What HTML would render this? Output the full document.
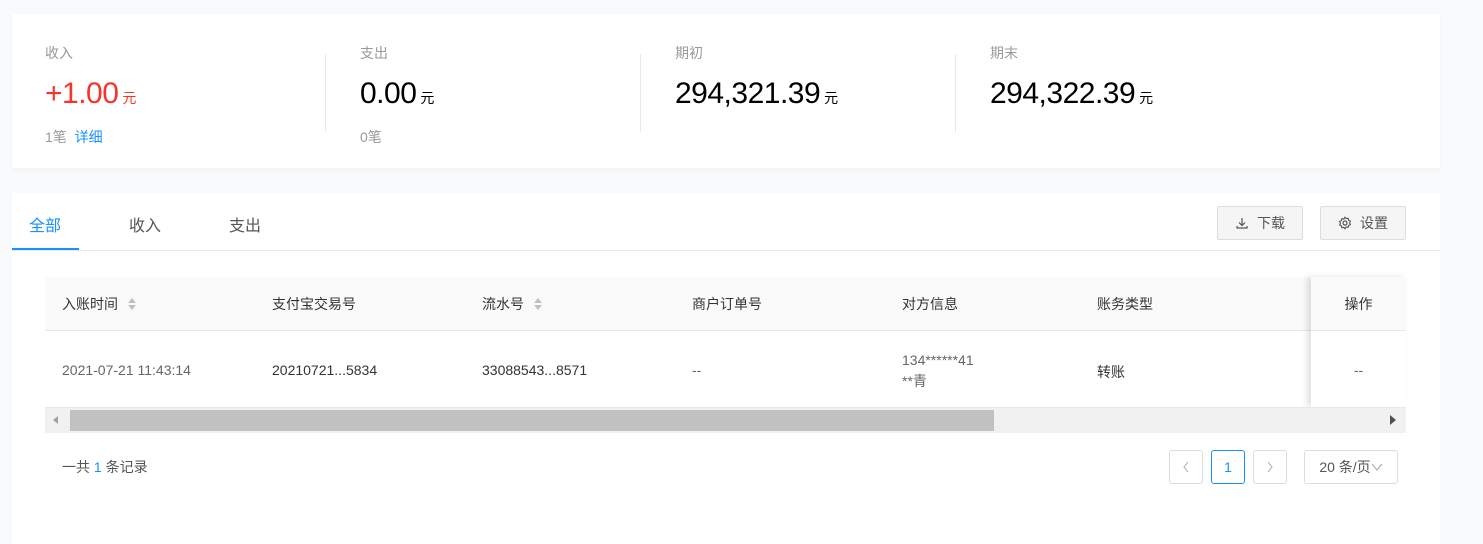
<!DOCTYPE html>
<html><head><meta charset="utf-8"><style>
*{box-sizing:border-box;margin:0;padding:0}
body{width:1483px;height:544px;background:#f9fafc;font-family:"Liberation Sans","Noto Sans CJK SC",sans-serif;position:relative;overflow:hidden;color:#333}
.abs{position:absolute}
.card{background:#fff;position:absolute}
.lbl{font-size:14px;color:#999}
.num{font-size:30px;color:#000;white-space:nowrap;letter-spacing:-0.5px}
.num span{font-size:14px;margin-left:4px;letter-spacing:0}
.sub{font-size:14px;color:#999}
.vl{position:absolute;width:1px;background:#e8e8e8;top:54px;height:78px}
.th{position:absolute;top:277px;height:54px;line-height:54px;font-size:14px;color:#333}
.td{position:absolute;font-size:14px;color:#333}
.btn{position:absolute;border:1px solid #ddd;background:#f5f5f5;border-radius:2px;font-size:14px;color:#555;text-align:center}
.pg{position:absolute;top:450px;height:34px;border:1px solid #ddd;border-radius:3px;background:#fff;font-size:14px;color:#bbb;text-align:center;line-height:32px}
.sort{display:inline-block;vertical-align:middle;margin-left:10px;width:8px;height:14px;position:relative;top:-1px}
.sort:before{content:"";position:absolute;left:0;top:1px;border:4px solid transparent;border-bottom:5px solid #c0c0c0;border-top:0}
.sort:after{content:"";position:absolute;left:0;top:8px;border:4px solid transparent;border-top:5px solid #c0c0c0;border-bottom:0}
</style></head><body>
<div class="card" style="left:12px;top:14px;width:1428px;height:154px;box-shadow:0 2px 6px rgba(0,0,0,0.03)"></div>
<div class="abs lbl" style="left:45px;top:43px">收入</div>
<div class="abs num" style="left:45px;top:77px;color:#f5352a">+1.00<span>元</span></div>
<div class="abs sub" style="left:45px;top:127px">1笔 &nbsp;<span style="color:#1890ff">详细</span></div>
<div class="vl" style="left:325px"></div>
<div class="abs lbl" style="left:360px;top:43px">支出</div>
<div class="abs num" style="left:360px;top:77px">0.00<span>元</span></div>
<div class="abs sub" style="left:360px;top:127px">0笔</div>
<div class="vl" style="left:640px"></div>
<div class="abs lbl" style="left:675px;top:43px">期初</div>
<div class="abs num" style="left:675px;top:77px">294,321.39<span>元</span></div>
<div class="vl" style="left:955px"></div>
<div class="abs lbl" style="left:990px;top:43px">期末</div>
<div class="abs num" style="left:990px;top:77px">294,322.39<span>元</span></div>

<div class="card" style="left:12px;top:193px;width:1428px;height:351px"></div>
<div class="abs" style="left:29px;top:212px;font-size:16px;color:#1890ff">全部</div>
<div class="abs" style="left:129px;top:212px;font-size:16px;color:#555">收入</div>
<div class="abs" style="left:229px;top:212px;font-size:16px;color:#555">支出</div>
<div class="abs" style="left:12px;top:250px;width:1428px;height:1px;background:#e8e8e8"></div>
<div class="abs" style="left:12px;top:248px;width:67px;height:2px;background:#1890ff"></div>
<div class="btn" style="left:1217px;top:206px;width:86px;height:34px;line-height:32px">
<svg width="14" height="14" viewBox="0 0 14 14" style="vertical-align:-2px;margin-right:8px"><path d="M7 2v7M4 6.5l3 3 3-3M2 10v2h10v-2" fill="none" stroke="#555" stroke-width="1.2"/></svg>下载</div>
<div class="btn" style="left:1320px;top:206px;width:86px;height:34px;line-height:32px">
<svg width="14" height="14" viewBox="0 0 14 14" style="vertical-align:-2px;margin-right:8px"><circle cx="7" cy="7" r="2" fill="none" stroke="#555" stroke-width="1.2"/><path d="M7 1.2l1.2 1.5 1.9-.4.5 1.9 1.8.8-.8 1.8.8 1.8-1.8.8-.5 1.9-1.9-.4L7 12.8 5.8 11.3l-1.9.4-.5-1.9-1.8-.8.8-1.8-.8-1.8 1.8-.8.5-1.9 1.9.4z" fill="none" stroke="#555" stroke-width="1.1"/></svg>设置</div>

<div class="abs" style="left:45px;top:277px;width:1361px;height:54px;background:#fafafa;border-bottom:1px solid #e8e8e8"></div>
<div class="th" style="left:62px">入账时间<i class="sort"></i></div>
<div class="th" style="left:272px">支付宝交易号</div>
<div class="th" style="left:482px">流水号<i class="sort"></i></div>
<div class="th" style="left:692px">商户订单号</div>
<div class="th" style="left:902px">对方信息</div>
<div class="th" style="left:1097px">账务类型</div>
<div class="td" style="left:62px;top:362px;color:#666">2021-07-21 11:43:14</div>
<div class="td" style="left:272px;top:362px">20210721...5834</div>
<div class="td" style="left:482px;top:362px">33088543...8571</div>
<div class="td" style="left:692px;top:362px;color:#666">--</div>
<div class="td" style="left:902px;top:350px;color:#666;line-height:21px">134******41<br>**青</div>
<div class="td" style="left:1097px;top:362px">转账</div>
<div class="abs" style="left:1311px;top:277px;width:95px;height:130px;background:#fff;box-shadow:-4px 0 6px rgba(0,0,0,0.12)"></div>
<div class="abs" style="left:1311px;top:277px;width:95px;height:54px;background:#fafafa;border-bottom:1px solid #e8e8e8;text-align:center;line-height:54px;font-size:14px">操作</div>
<div class="td" style="left:1311px;top:362px;width:95px;text-align:center;color:#666">--</div>
<div class="abs" style="left:45px;top:407px;width:1361px;height:26px;background:#f1f1f1;border-top:1px solid #e8e8e8"></div>
<div class="abs" style="left:70px;top:410px;width:924px;height:21px;background:#c1c1c1"></div>
<div class="abs" style="left:53px;top:416px;border:4px solid transparent;border-right:5px solid #a3a3a3;border-left:0;height:0"></div>
<div class="abs" style="left:1390px;top:415px;border:5px solid transparent;border-left:6px solid #505050;border-right:0"></div>

<div class="abs" style="left:62px;top:457px;font-size:14px;color:#555">一共 <span style="color:#1890ff">1</span> 条记录</div>
<div class="pg" style="left:1169px;width:34px"><svg width="10" height="14" viewBox="0 0 10 14" style="vertical-align:-2px"><path d="M7 2L3 7l4 5" fill="none" stroke="#bbb" stroke-width="1.2"/></svg></div>
<div class="pg" style="left:1211px;width:34px;border-color:#1890ff;color:#1890ff">1</div>
<div class="pg" style="left:1253px;width:34px"><svg width="10" height="14" viewBox="0 0 10 14" style="vertical-align:-2px"><path d="M3 2l4 5-4 5" fill="none" stroke="#bbb" stroke-width="1.2"/></svg></div>
<div class="pg" style="left:1304px;width:94px;color:#555">20 条/页<svg width="12" height="10" viewBox="0 0 12 10" style="vertical-align:0"><path d="M1 2l5 6 5-6" fill="none" stroke="#aaa" stroke-width="1.1"/></svg></div>
</body></html>
